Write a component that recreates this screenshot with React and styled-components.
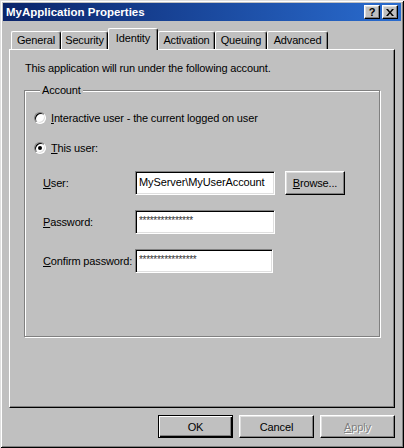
import React from "react";
import styled, { createGlobalStyle, css } from "styled-components";

const GlobalStyle = createGlobalStyle`
  html, body {
    margin: 0;
    padding: 0;
    background: #c0c0c0;
  }
  body {
    font-family: "Liberation Sans", Arial, sans-serif;
    font-size: 11px;
    letter-spacing: -0.15px;
    color: #000;
  }
`;

const raised = css`
  border-style: solid;
  border-width: 1px;
  border-color: #fff #000 #000 #fff;
  box-shadow: inset -1px -1px 0 #808080, inset 1px 1px 0 #dfdfdf;
  background: #c0c0c0;
`;

const Window = styled.div`
  width: 404px;
  height: 448px;
  box-sizing: border-box;
  padding: 3px;
  background: #c0c0c0;
  box-shadow: inset 1px 1px 0 #dfdfdf, inset -1px -1px 0 #000,
    inset 2px 2px 0 #fff, inset -2px -2px 0 #808080;
  display: flex;
  flex-direction: column;
`;

const TitleBar = styled.div`
  height: 18px;
  display: flex;
  align-items: center;
  padding: 0 3px 0 3px;
  background: linear-gradient(to right, #0a246a, #2a6ccf);
  color: #fff;
`;

const Title = styled.span`
  flex: 1;
  font-weight: bold;
  font-size: 11.5px;
  letter-spacing: 0;
`;

const CaptionButton = styled.button`
  ${raised};
  box-sizing: border-box;
  width: 16px;
  height: 14px;
  padding: 0;
  margin-left: ${(p) => (p.$gap ? "2px" : "0")};
  display: flex;
  align-items: center;
  justify-content: center;
  font: bold 11px "Liberation Sans", Arial, sans-serif;
  color: #000;
`;

const Body = styled.div`
  flex: 1;
  display: flex;
  flex-direction: column;
  padding: 7px 6px 0 6px;
`;

const TabRow = styled.div`
  display: flex;
  align-items: flex-end;
  height: 21px;
  padding-left: 2px;
`;

const Tab = styled.div`
  box-sizing: border-box;
  width: ${(p) => p.$w}px;
  height: ${(p) => (p.$active ? 22 : 18)}px;
  margin-bottom: ${(p) => (p.$active ? -1 : 0)}px;
  padding-bottom: ${(p) => (p.$active ? 3 : 1)}px;
  position: relative;
  z-index: ${(p) => (p.$active ? 2 : 0)};
  background: #c0c0c0;
  border-top: 1px solid #fff;
  border-left: 1px solid #fff;
  border-right: 1px solid #000;
  border-radius: 2px 3px 0 0;
  box-shadow: inset -1px 0 0 #808080;
  display: flex;
  align-items: center;
  justify-content: center;
`;

const Panel = styled.div`
  height: 359px;
  box-sizing: border-box;
  border-style: solid;
  border-width: 1px;
  border-color: #fff #000 #000 #fff;
  box-shadow: inset -1px -1px 0 #808080;
  padding: 12px 14px 0 14px;
`;

const Intro = styled.div`
  line-height: 13px;
  padding-left: 1px;
`;

const Group = styled.fieldset`
  margin: 9px 0 0 0;
  padding: 14px 0 0 9px;
  box-sizing: border-box;
  height: 253px;
  border: 1px solid #808080;
  box-shadow: inset 1px 1px 0 #fff, 1px 1px 0 #fff;
`;

const Legend = styled.legend`
  margin-left: 6px;
  padding: 0 2px;
  line-height: 13px;
  background: #c0c0c0;
`;

const RadioRow = styled.label`
  display: flex;
  align-items: center;
  height: 13px;
  margin-bottom: ${(p) => p.$mb || 0}px;
`;

const RadioDot = styled.span`
  box-sizing: border-box;
  width: 12px;
  height: 12px;
  border-radius: 50%;
  border: 1px solid;
  border-color: #808080 #fff #fff #808080;
  box-shadow: inset 1px 1px 0 #000, inset -1px -1px 0 #dfdfdf;
  background: #fff;
  margin-right: 5px;
  display: flex;
  align-items: center;
  justify-content: center;
  &::after {
    content: "";
    width: 4px;
    height: 4px;
    border-radius: 50%;
    background: ${(p) => (p.$checked ? "#000" : "transparent")};
  }
`;

const Form = styled.div`
  display: grid;
  grid-template-columns: 92px 140px auto;
  row-gap: 15px;
  align-items: center;
  margin: 17px 0 0 9px;
`;

const Label = styled.span`
  line-height: 13px;
`;

const TextBox = styled.input`
  box-sizing: border-box;
  width: ${(p) => p.$w || 140}px;
  height: 24px;
  margin: 0;
  padding: 1px 3px 4px;
  border: 1px solid;
  border-color: #808080 #fff #fff #808080;
  box-shadow: inset 1px 1px 0 #000, inset -1px -1px 0 #dfdfdf;
  background: #fff;
  font: ${(p) => (p.$secret ? "10px" : "11px")} "Liberation Sans", Arial, sans-serif;
  letter-spacing: ${(p) => (p.$secret ? "-0.3px" : "-0.1px")};
  color: ${(p) => (p.$secret ? "#333" : "#000")};
  outline: none;
`;

const Button = styled.button`
  ${raised};
  box-sizing: border-box;
  width: ${(p) => p.$w || 75}px;
  height: ${(p) => p.$h || 23}px;
  padding: 0;
  margin: 0 0 0 ${(p) => p.$ml || 0}px;
  font: 11px "Liberation Sans", Arial, sans-serif;
  letter-spacing: -0.15px;
  color: ${(p) => (p.disabled ? "#808080" : "#000")};
  text-shadow: ${(p) => (p.disabled ? "1px 1px 0 #fff" : "none")};
  ${(p) =>
    p.$default &&
    css`
      border: 1px solid #000;
      box-shadow: inset 1px 1px 0 #fff, inset -1px -1px 0 #000,
        inset -2px -2px 0 #808080;
    `}
`;

const Footer = styled.div`
  display: flex;
  justify-content: flex-end;
  gap: 6px;
  margin-top: 7px;
`;

const tabs = [
  { label: "General", w: 50 },
  { label: "Security", w: 47 },
  { label: "Identity", w: 50, active: true },
  { label: "Activation", w: 57 },
  { label: "Queuing", w: 52 },
  { label: "Advanced", w: 61 },
];

export default function App() {
  return (
    <>
      <GlobalStyle />
      <Window>
        <TitleBar>
          <Title>MyApplication Properties</Title>
          <CaptionButton>?</CaptionButton>
          <CaptionButton $gap>
            <svg width="8" height="7" viewBox="0 0 8 7">
              <path d="M0 0h2l2 2.5L6 0h2L5 3.5 8 7H6L4 4.5 2 7H0l3-3.5z" fill="#000" />
            </svg>
          </CaptionButton>
        </TitleBar>
        <Body>
          <TabRow>
            {tabs.map((t) => (
              <Tab key={t.label} $w={t.w} $active={t.active}>
                {t.label}
              </Tab>
            ))}
          </TabRow>
          <Panel>
            <Intro>This application will run under the following account.</Intro>
            <Group>
              <Legend>Account</Legend>
              <RadioRow $mb={17}>
                <RadioDot />
                <span>
                  <u>I</u>nteractive user - the current logged on user
                </span>
              </RadioRow>
              <RadioRow>
                <RadioDot $checked />
                <span>
                  <u>T</u>his user:
                </span>
              </RadioRow>
              <Form>
                <Label>
                  <u>U</u>ser:
                </Label>
                <TextBox readOnly value="MyServer\MyUserAccount" />
                <Button $w={60} $h={24} $ml={10}>
                  <u>B</u>rowse...
                </Button>
                <Label>
                  <u>P</u>assword:
                </Label>
                <TextBox readOnly $secret value="***************" />
                <span />
                <Label>
                  <u>C</u>onfirm password:
                </Label>
                <TextBox readOnly $secret $w={138} value="****************" />
                <span />
              </Form>
            </Group>
          </Panel>
          <Footer>
            <Button $default>OK</Button>
            <Button>Cancel</Button>
            <Button disabled>
              <u>A</u>pply
            </Button>
          </Footer>
        </Body>
      </Window>
    </>
  );
}
